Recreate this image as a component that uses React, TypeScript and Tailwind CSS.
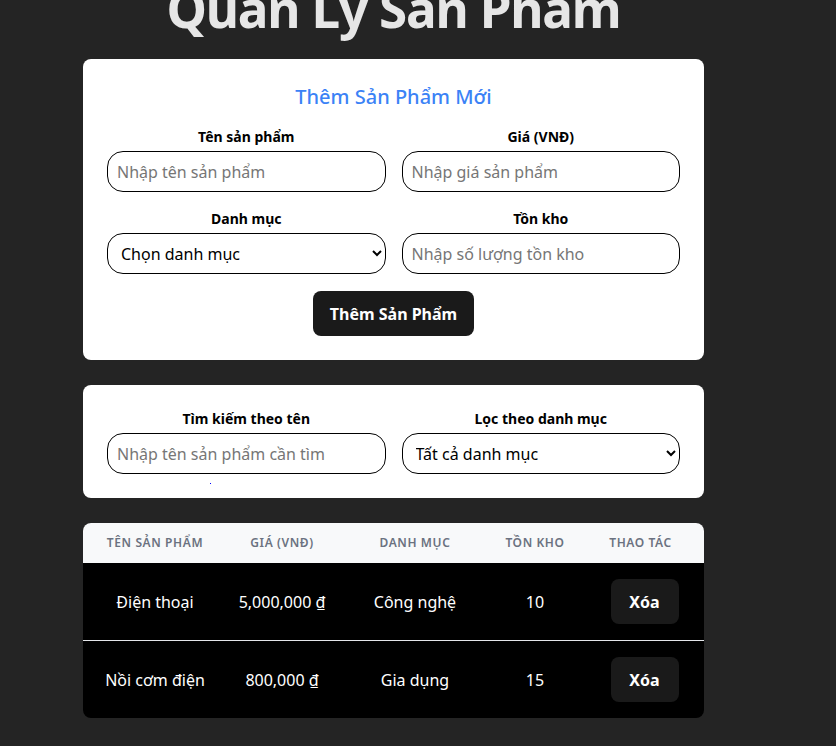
import React from 'react';

interface Product {
  id: string;
  name: string;
  price: number;
  category: string;
  stock: number;
}

const products: Product[] = [
  { id: '1', name: 'Điện thoại', price: 5000000, category: 'Công nghệ', stock: 10 },
  { id: '2', name: 'Nồi cơm điện', price: 800000, category: 'Gia dụng', stock: 15 },
];

const fieldClass =
  'h-[41px] w-full rounded-[16px] border border-black bg-white px-[9px] text-[16px] text-black outline-none placeholder:text-[#767676]';

const Label = ({ children }: { children: React.ReactNode }) => (
  <label className="mb-1 block text-center text-[14px] font-bold leading-5 text-black">{children}</label>
);

const App = () => {
  return (
    <div
      className="h-[746px] overflow-hidden bg-[#242424]"
      style={{ fontFamily: '"Segoe UI", "Noto Sans", sans-serif' }}
    >
      <div className="ml-[83px] w-[621px]">
        <h1 className="mt-[-20px] text-center text-[51.2px] font-bold leading-[1.1] tracking-[-1.2px] text-[#e6e6e6]">
          Quản Lý Sản Phẩm
        </h1>

        {/* thêm sản phẩm */}
        <div className="mt-[23px] rounded-lg bg-white p-6">
          <h2 className="mb-4 text-center text-[20px] font-medium leading-7 text-[#3b82f6]">Thêm Sản Phẩm Mới</h2>
          <div className="grid grid-cols-2 gap-x-4 gap-y-[17px]">
            <div>
              <Label>Tên sản phẩm</Label>
              <input className={fieldClass} placeholder="Nhập tên sản phẩm" />
            </div>
            <div>
              <Label>Giá (VNĐ)</Label>
              <input className={fieldClass} placeholder="Nhập giá sản phẩm" />
            </div>
            <div>
              <Label>Danh mục</Label>
              <select className={fieldClass} defaultValue="">
                <option value="">Chọn danh mục</option>
                <option value="cn">Công nghệ</option>
                <option value="gd">Gia dụng</option>
              </select>
            </div>
            <div>
              <Label>Tồn kho</Label>
              <input className={fieldClass} placeholder="Nhập số lượng tồn kho" />
            </div>
          </div>
          <div className="mt-[17px] flex justify-center">
            <button className="h-[45px] rounded-lg bg-[#1a1a1a] px-[17px] text-[16px] font-bold text-white">
              Thêm Sản Phẩm
            </button>
          </div>
        </div>

        {/* tìm kiếm */}
        <div className="relative mt-[25px] rounded-lg bg-white p-6">
          <div className="grid grid-cols-2 gap-x-4">
            <div>
              <Label>Tìm kiếm theo tên</Label>
              <input className={fieldClass} placeholder="Nhập tên sản phẩm cần tìm" />
            </div>
            <div>
              <Label>Lọc theo danh mục</Label>
              <select className={fieldClass} defaultValue="">
                <option value="">Tất cả danh mục</option>
                <option value="cn">Công nghệ</option>
                <option value="gd">Gia dụng</option>
              </select>
            </div>
          </div>
          <span className="absolute left-[127px] top-[98px] h-px w-px bg-[#0000ff]" />
        </div>

        {/* bảng */}
        <div className="mt-[25px] overflow-hidden rounded-lg bg-black">
          <div className="grid h-10 grid-cols-[144px_110px_156px_84px_127px] items-center bg-[#f8f9fa] text-center text-[12px] font-semibold uppercase tracking-[0.05em] text-[#6b7280]">
            <div>Tên sản phẩm</div>
            <div>Giá (VNĐ)</div>
            <div>Danh mục</div>
            <div>Tồn kho</div>
            <div>Thao tác</div>
          </div>
          {products.map((p, i) => (
            <div
              key={p.id}
              className={`grid grid-cols-[144px_110px_156px_84px_127px] items-center text-center text-[16px] text-white ${
                i < products.length - 1 ? 'h-[78px] border-b border-[#e5e7eb]' : 'h-[77px]'
              }`}
            >
              <div>{p.name}</div>
              <div>{p.price.toLocaleString('en-US')} ₫</div>
              <div>{p.category}</div>
              <div>{p.stock}</div>
              <div className="flex justify-center pl-2">
                <button className="h-[45px] w-[68px] rounded-lg bg-[#1a1a1a] text-[16px] font-bold text-white">
                  Xóa
                </button>
              </div>
            </div>
          ))}
        </div>
      </div>
    </div>
  );
};

export default App;
